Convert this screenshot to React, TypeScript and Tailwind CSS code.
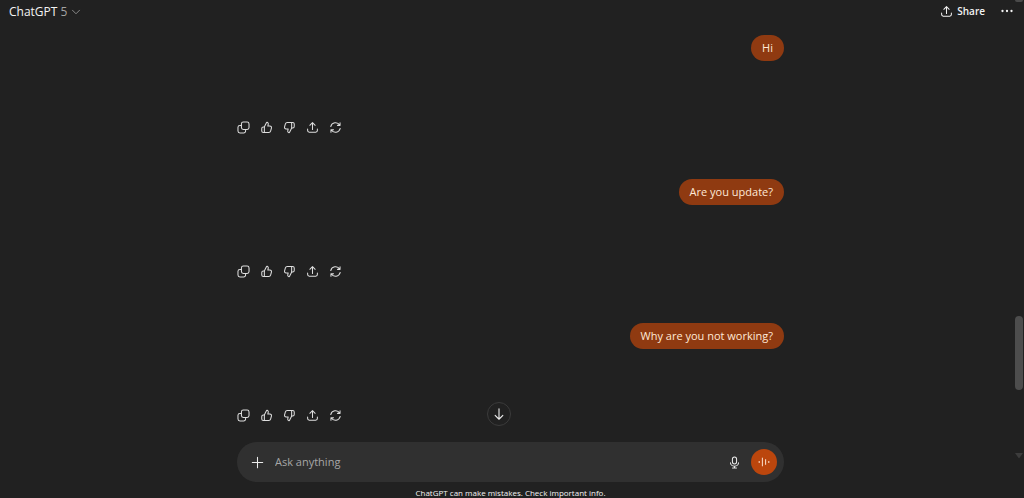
import { useState } from "react";
import type { ReactNode } from "react";

type Turn = { id: number; text: string };

const turns: Turn[] = [
  { id: 1, text: "Hi" },
  { id: 2, text: "Are you update?" },
  { id: 3, text: "Why are you not working?" },
];

function Icon({ children, className = "size-[13px]" }: { children: ReactNode; className?: string }) {
  return (
    <svg
      viewBox="0 0 20 20"
      className={className}
      fill="none"
      stroke="currentColor"
      strokeWidth="1.6"
      strokeLinecap="round"
      strokeLinejoin="round"
      aria-hidden="true"
    >
      {children}
    </svg>
  );
}

const thumb = (
  <>
    <path d="M6.6 9.2 9.9 2.6c.2-.4.6-.6 1-.5 1.3.3 2.1 1.5 1.8 2.8L12 7.8h3.3c1.6 0 2.7 1.5 2.3 3l-1.3 4.7a3 3 0 0 1-2.9 2.2H5.2a2.5 2.5 0 0 1-2.5-2.5v-3.5c0-1.4 1.1-2.5 2.5-2.5z" />
    <path d="M6.7 9.2v8.5" />
  </>
);

const share = (
  <path d="M10 13V2.7M5.9 6.6 10 2.5l4.1 4.1M2.5 12.5v2.2A2.5 2.5 0 0 0 5 17.2h10a2.5 2.5 0 0 0 2.5-2.5v-2.2" />
);

const actions: { label: string; icon: ReactNode }[] = [
  {
    label: "Copy",
    icon: (
      <>
        <rect x="6.8" y="1.5" width="11.7" height="11.5" rx="3" />
        <path d="M6.8 6.8H4.5a3 3 0 0 0-3 3v5.7a3 3 0 0 0 3 3h5.7a3 3 0 0 0 3-3V13" />
      </>
    ),
  },
  { label: "Good response", icon: thumb },
  { label: "Bad response", icon: <g transform="rotate(180 10 10)">{thumb}</g> },
  { label: "Share", icon: share },
  {
    label: "Try again",
    icon: (
      <>
        <path d="M2.7 8.5a7.5 7.5 0 0 1 13.8-2M17 2.7v4h-4" />
        <path d="M17.3 11.5a7.5 7.5 0 0 1-13.8 2M3 17.3v-4h4" />
      </>
    ),
  },
];

function Header() {
  return (
    <header className="flex h-6 shrink-0 items-start justify-between pr-px pl-[9px]">
      <button type="button" className="flex h-[23px] items-center gap-1 text-xs text-[#f3f3f3]">
        <span>
          ChatGPT <span className="text-[#a3a3a3]">5</span>
        </span>
        <Icon className="size-2.5 text-[#a3a3a3]">
          <path d="m3 6.5 7 7 7-7" />
        </Icon>
      </button>
      <div className="flex h-[22px] items-center gap-4">
        <button type="button" className="flex items-center gap-1 text-[10px] font-semibold text-[#f3f3f3]">
          <Icon>{share}</Icon>
          Share
        </button>
        <button type="button" aria-label="More options" className="text-[#f3f3f3]">
          <svg viewBox="0 0 12 12" className="size-3" fill="currentColor" aria-hidden="true">
            <circle cx="1.5" cy="6" r="1.15" />
            <circle cx="6" cy="6" r="1.15" />
            <circle cx="10.5" cy="6" r="1.15" />
          </svg>
        </button>
      </div>
    </header>
  );
}

function ChatTurn({ text }: { text: string }) {
  return (
    <article className="flex h-36 shrink-0 flex-col">
      <p className="self-end rounded-full bg-[#8f3a11] px-[11px] py-[5px] text-[11px] leading-4 text-[#ffe9d6]">
        {text}
      </p>
      <div className="mt-[60px] flex gap-2.5 text-[#dedede]">
        {actions.map((action) => (
          <button key={action.label} type="button" aria-label={action.label}>
            <Icon>{action.icon}</Icon>
          </button>
        ))}
      </div>
    </article>
  );
}

function Composer() {
  const [prompt, setPrompt] = useState("");

  return (
    <form
      onSubmit={(e) => e.preventDefault()}
      className="mx-auto flex h-10 w-full max-w-[547px] shrink-0 items-center rounded-full bg-[#303030] pr-[7px] pl-3.5 text-[#ececec]"
    >
      <button type="button" aria-label="Add files">
        <Icon>
          <path d="M10 2v16M2 10h16" />
        </Icon>
      </button>
      <input
        type="text"
        aria-label="Ask anything"
        placeholder="Ask anything"
        value={prompt}
        onChange={(e) => setPrompt(e.target.value)}
        className="ml-[11px] min-w-0 flex-1 bg-transparent text-[11px] leading-4 outline-none placeholder:text-[#a6a6a6]"
      />
      <button type="button" aria-label="Dictate" className="mr-2.5">
        <Icon>
          <rect x="6.8" y="1.5" width="6.4" height="10.7" rx="3.2" />
          <path d="M3.8 10.5a6.2 5.2 0 0 0 12.4 0M10 15.7v2.8M7 18.5h6" />
        </Icon>
      </button>
      <button
        type="button"
        aria-label="Voice mode"
        className="flex size-[26px] items-center justify-center rounded-full bg-[#bb460d] text-[#ffe9d6]"
      >
        <Icon className="size-3">
          <path d="M2 9v2M7.3 3.5v13M12.7 6v8M18 9v2" />
        </Icon>
      </button>
    </form>
  );
}

function ScrollTrack() {
  return (
    <div className="flex w-2.5 shrink-0 flex-col items-center" aria-hidden="true">
      <div className="h-0.5 w-2 rounded-b bg-[#4a4a4a]" />
      <div className="flex-[314]" />
      <div className="h-[74px] w-2 rounded-full bg-[#4d4d4d]" />
      <div className="flex-[63]" />
      <svg viewBox="0 0 8 6" className="mb-[39px] h-1.5 w-2 fill-[#3c3c3c]">
        <path d="M0 0h8L4 5.5z" />
      </svg>
    </div>
  );
}

export default function App() {
  return (
    <div className="flex h-screen overflow-hidden bg-[#212121] font-['Open_Sans','Noto_Sans',sans-serif]">
      <div className="flex min-w-0 flex-1 flex-col">
        <Header />
        <main className="relative flex min-h-0 flex-1 flex-col pl-[7px]">
          <section className="mx-auto flex min-h-0 w-full max-w-[547px] flex-1 flex-col overflow-hidden pt-[11px]">
            {turns.map((turn) => (
              <ChatTurn key={turn.id} text={turn.text} />
            ))}
          </section>
          <div className="absolute inset-x-0 bottom-[72px] flex justify-center pr-4">
            <button
              type="button"
              aria-label="Scroll to bottom"
              className="flex size-6 items-center justify-center rounded-full border border-[#3b3b3b] bg-[#212121] text-[#ececec]"
            >
              <Icon className="size-3.5">
                <path d="M10 2.5v15M4.5 12l5.5 5.5 5.5-5.5" />
              </Icon>
            </button>
          </div>
          <Composer />
          <p className="flex h-4 shrink-0 items-end justify-center text-[8px] leading-[10px] text-[#f3f3f3]">
            ChatGPT can make mistakes. Check important info.
          </p>
        </main>
      </div>
      <ScrollTrack />
    </div>
  );
}
